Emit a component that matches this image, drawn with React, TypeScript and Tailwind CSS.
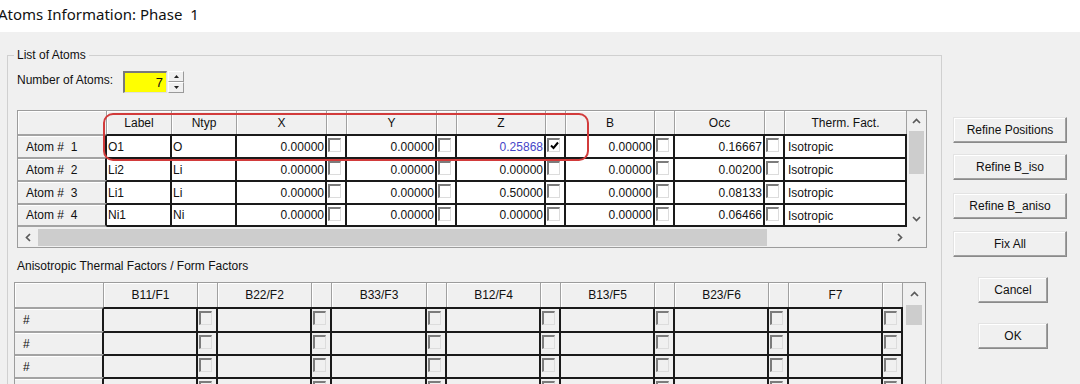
import React from "react";

type Dir = "up" | "down" | "left" | "right";

function Chevron({ dir }: { dir: Dir }) {
  const pts = {
    up: "1,6 4.5,2.5 8,6",
    down: "1,3 4.5,6.5 8,3",
    left: "6,1 2.5,4.5 6,8",
    right: "3,1 6.5,4.5 3,8",
  }[dir];
  return (
    <svg width="9" height="9" viewBox="0 0 9 9">
      <polyline points={pts} fill="none" stroke="#5a5a5a" strokeWidth="1.7" />
    </svg>
  );
}

function Box({ checked = false, gray = false }: { checked?: boolean; gray?: boolean }) {
  return (
    <div
      className={
        "relative mt-[2px] ml-[1px] w-[13px] h-[14px] border-t-2 border-l-2 border-r border-b border-t-[#7c7c7c] border-l-[#7c7c7c] border-r-[#dcdcdc] border-b-[#dcdcdc] " +
        (gray ? "bg-[#f0f0f0]" : "bg-white")
      }
    >
      {checked && (
        <svg width="11" height="11" viewBox="0 0 11 11" className="absolute left-[0px] top-[0px]">
          <polyline points="2,5.5 4.5,8 9,2.5" fill="none" stroke="#000" strokeWidth="2" />
        </svg>
      )}
    </div>
  );
}

const hdr = "bg-[#f0f0f0] border-r border-[#a0a0a0] shadow-[inset_1px_1px_0_#ffffff] flex items-center justify-center";
const rowHdr =
  "bg-[#f0f0f0] border-t-2 border-t-[#a3a3a3] border-r-2 border-r-[#1a1a1a] shadow-[inset_0_1px_0_#ffffff] flex items-center pl-[8px] whitespace-pre";

const atoms = [
  { n: "1", label: "O1", ntyp: "O", x: "0.00000", y: "0.00000", z: "0.25868", zc: true, b: "0.00000", occ: "0.16667" },
  { n: "2", label: "Li2", ntyp: "Li", x: "0.00000", y: "0.00000", z: "0.00000", zc: false, b: "0.00000", occ: "0.00200" },
  { n: "3", label: "Li1", ntyp: "Li", x: "0.00000", y: "0.00000", z: "0.50000", zc: false, b: "0.00000", occ: "0.08133" },
  { n: "4", label: "Ni1", ntyp: "Ni", x: "0.00000", y: "0.00000", z: "0.00000", zc: false, b: "0.00000", occ: "0.06466" },
];

function TopTable() {
  const topHeaders = ["Label", "Ntyp", "X", "", "Y", "", "Z", "", "B", "", "Occ", "", "Therm. Fact."];
  return (
    <div className="w-[910px] border border-[#9c9c9c] bg-[#f0f0f0]">
      <div className="flex">
        <div className="grid w-[889px] grid-cols-[89px_65px_65px_90px_20px_90px_20px_89px_20px_89px_20px_90px_20px_122px] grid-rows-[23px_23px_23px_23px_24px]">
          <div className={hdr} />
          {topHeaders.map((h, i) => (
            <div key={"h" + i} className={hdr}>
              {h}
            </div>
          ))}
          {atoms.map((a, r) => {
            const last = r === atoms.length - 1;
            const cell = "border-t-2 border-r-2 border-[#1a1a1a] bg-white " + (last ? "border-b-2 " : "");
            const num = cell + "flex items-center justify-end pr-[1px]";
            const txt = cell + "flex items-center pl-[1px]";
            return (
              <React.Fragment key={a.n}>
                <div className={rowHdr + (last ? " border-b-2 border-b-[#a3a3a3]" : "")}>{"Atom #  " + a.n}</div>
                <div className={txt}>{a.label}</div>
                <div className={txt}>{a.ntyp}</div>
                <div className={num}>{a.x}</div>
                <div className={cell}>
                  <Box />
                </div>
                <div className={num}>{a.y}</div>
                <div className={cell}>
                  <Box />
                </div>
                <div className={num + (a.zc ? " text-[#4646c8]" : "")}>{a.z}</div>
                <div className={cell}>
                  <Box checked={a.zc} />
                </div>
                <div className={num}>{a.b}</div>
                <div className={cell}>
                  <Box />
                </div>
                <div className={num}>{a.occ}</div>
                <div className={cell}>
                  <Box />
                </div>
                <div className={cell + "pl-[3px] pt-[4px]"}>Isotropic</div>
              </React.Fragment>
            );
          })}
        </div>
        <div className="w-[19px] h-[117px] flex flex-col items-center bg-[#f0f0f0]">
          <div className="h-[20px] flex items-center justify-center">
            <Chevron dir="up" />
          </div>
          <div className="w-[15px] h-[43px] bg-[#cdcdcd]" />
          <div className="flex-1" />
          <div className="h-[20px] flex items-center justify-center">
            <Chevron dir="down" />
          </div>
        </div>
      </div>
      <div className="h-[19px] flex items-center">
        <div className="w-[20px] flex justify-center">
          <Chevron dir="left" />
        </div>
        <div className="w-[729px] h-[17px] bg-[#cdcdcd]" />
        <div className="flex-1" />
        <div className="w-[20px] flex justify-center">
          <Chevron dir="right" />
        </div>
        <div className="w-[17px]" />
      </div>
    </div>
  );
}

function BottomTable() {
  const heads = ["B11/F1", "", "B22/F2", "", "B33/F3", "", "B12/F4", "", "B13/F5", "", "B23/F6", "", "F7", ""];
  const rows = [0, 1, 2, 3];
  return (
    <div className="w-[912px] border border-[#9c9c9c] bg-[#f0f0f0] flex">
      <div className="grid w-[888px] grid-cols-[89px_94px_20px_94px_20px_95px_20px_94px_20px_94px_20px_94px_20px_94px_20px] grid-rows-[24px_24px_23px_23px_23px]">
        <div className={hdr} />
        {heads.map((h, i) => (
          <div key={"bh" + i} className={hdr}>
            {h}
          </div>
        ))}
        {rows.map((r) => (
          <React.Fragment key={"br" + r}>
            <div className={rowHdr}>#</div>
            {heads.map((h, i) => (
              <div key={"bc" + r + "-" + i} className="border-t-2 border-r-2 border-[#1a1a1a] bg-[#f0f0f0]">
                {i % 2 === 1 ? <Box gray /> : null}
              </div>
            ))}
          </React.Fragment>
        ))}
      </div>
      <div className="w-[22px] flex flex-col items-center">
        <div className="h-[22px] flex items-center justify-center">
          <Chevron dir="up" />
        </div>
        <div className="w-[16px] h-[20px] bg-[#cdcdcd]" />
      </div>
    </div>
  );
}

function Btn({ children, w, className = "" }: { children: React.ReactNode; w: string; className?: string }) {
  return (
    <div
      className={
        w +
        " h-[26px] flex items-center justify-center bg-[#f0f0f0] border border-t-[#e3e3e3] border-l-[#e3e3e3] border-r-[#8a8a8a] border-b-[#8a8a8a] shadow-[inset_-1px_-1px_0_#a0a0a0,inset_1px_1px_0_#ffffff] " +
        className
      }
    >
      {children}
    </div>
  );
}

export default function App() {
  return (
    <div className="relative w-[1080px] h-[384px] overflow-hidden bg-[#f0f0f0] text-[12px] leading-[14px] text-[#111] font-['Liberation_Sans',Arial,sans-serif]">
      <div className="h-[32px] bg-white">
        <div className="ml-[-2px] whitespace-pre text-[15px] leading-[28px] text-[#111] font-['Noto_Sans',sans-serif]">
          {"Atoms Information: Phase  1"}
        </div>
      </div>
      <div className="flex items-start">
        <div className="relative ml-[7px] mt-[23px] w-[935px] h-[400px] border border-[#d0d0d0] pl-[9px]">
          <span className="absolute left-[6px] top-[-8px] px-[3px] bg-[#f0f0f0]">List of Atoms</span>
          <div className="mt-[15px] flex items-start h-[22px]">
            <div className="w-[106px] mt-[2px]">Number of Atoms:</div>
            <div className="w-[44px] h-[22px] bg-[#ffff00] border-t-2 border-l-2 border-r border-b border-t-[#7a7a7a] border-l-[#7a7a7a] border-r-[#e0e0e0] border-b-[#e0e0e0] flex items-center justify-end pr-[3px] text-[13px]">
              7
            </div>
            <div className="ml-[1px] w-[16px] h-[22px] flex flex-col">
              <div className="h-[11px] flex items-center justify-center border border-t-white border-l-white border-r-[#9a9a9a] border-b-[#9a9a9a]">
                <svg width="5" height="3" viewBox="0 0 5 3">
                  <polygon points="0,3 2.5,0 5,3" fill="#222" />
                </svg>
              </div>
              <div className="h-[11px] flex items-center justify-center border border-t-white border-l-white border-r-[#9a9a9a] border-b-[#9a9a9a]">
                <svg width="5" height="3" viewBox="0 0 5 3">
                  <polygon points="0,0 2.5,3 5,0" fill="#222" />
                </svg>
              </div>
            </div>
          </div>
          <div className="mt-[17px]">
            <TopTable />
          </div>
          <div className="mt-[11px]">Anisotropic Thermal Factors / Form Factors</div>
          <div className="mt-[9px] ml-[-3px]">
            <BottomTable />
          </div>
        </div>
        <div className="flex flex-col">
          <Btn w="w-[114px]" className="ml-[11px] mt-[85px]">Refine Positions</Btn>
          <Btn w="w-[114px]" className="ml-[11px] mt-[11px]">Refine B_iso</Btn>
          <Btn w="w-[114px]" className="ml-[11px] mt-[13px]">Refine B_aniso</Btn>
          <Btn w="w-[114px]" className="ml-[11px] mt-[12px]">Fix All</Btn>
          <Btn w="w-[70px]" className="ml-[36px] mt-[20px]">Cancel</Btn>
          <Btn w="w-[70px]" className="ml-[36px] mt-[20px]">OK</Btn>
        </div>
      </div>
      <div className="pointer-events-none absolute left-[103px] top-[113px] w-[486px] h-[48px] border-2 border-[#d23b3b] rounded-[10px]" />
    </div>
  );
}
